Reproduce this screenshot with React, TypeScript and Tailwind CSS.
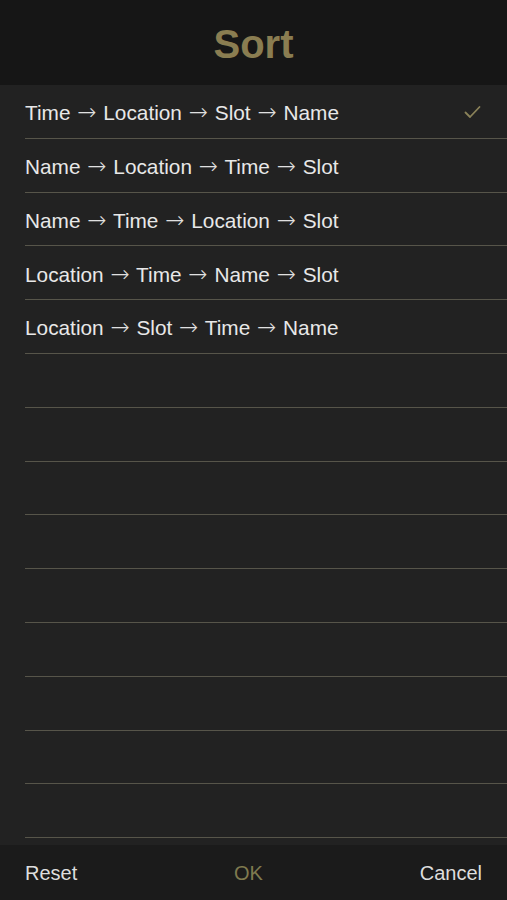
import React from "react";

const rows = [
  ["Time", "Location", "Slot", "Name"],
  ["Name", "Location", "Time", "Slot"],
  ["Name", "Time", "Location", "Slot"],
  ["Location", "Time", "Name", "Slot"],
  ["Location", "Slot", "Time", "Name"],
];

function Row({ parts }: { parts: string[] }) {
  return (
    <span className="text-[20.8px] text-[#e8e8e8] whitespace-pre">
      {parts.map((p, i) => (
        <React.Fragment key={i}>
          {i > 0 && (
            <>
              {" "}
              <span
                className="text-[23px] text-[#e0e0e0] mx-[1px] font-light"
                style={{ fontFamily: '"DejaVu Sans", sans-serif' }}
              >
                →
              </span>{" "}
            </>
          )}
          {p}
        </React.Fragment>
      ))}
    </span>
  );
}

export default function App() {
  const all: (string[] | null)[] = [...rows, ...Array(9).fill(null)];
  return (
    <div
      className="w-[507px] h-[900px] flex flex-col bg-[#222222] overflow-hidden"
      style={{ fontFamily: '"Liberation Sans", Arial, sans-serif' }}
    >
      <div className="h-[85px] shrink-0 bg-[#161616] flex items-center justify-center">
        <span className="text-[40px] font-bold text-[#8a7d51] leading-none pt-[3px]">Sort</span>
      </div>
      <div className="flex-1 flex flex-col overflow-hidden">
        {all.map((r, i) => (
          <div
            key={i}
            className="h-[53.8px] shrink-0 ml-[25px] border-b border-[#57554a] flex items-center justify-between pr-[26px] pt-[2px]"
          >
            {r ? <Row parts={r} /> : <span />}
            {i === 0 && (
              <svg width="17" height="14" viewBox="0 0 17 14" fill="none">
                <path d="M1.5 7.5 L6 12 L15.5 2" stroke="#8a8259" strokeWidth="1.8" strokeLinecap="round" strokeLinejoin="round" />
              </svg>
            )}
          </div>
        ))}
      </div>
      <div className="h-[55px] shrink-0 bg-[#1b1b1b] flex items-center justify-between px-[25px] text-[20px]">
        <span className="text-[#dedede]">Reset</span>
        <span className="text-[#7f7a4f]">OK</span>
        <span className="text-[#dedede]">Cancel</span>
      </div>
    </div>
  );
}
